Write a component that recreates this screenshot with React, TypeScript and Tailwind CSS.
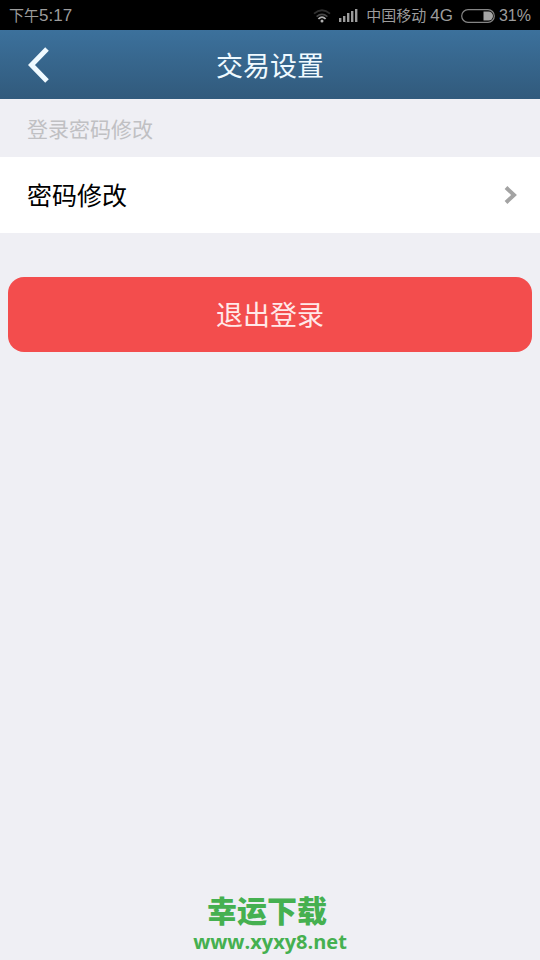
interface SettingItem {
  href: string;
  label: string;
}

const SETTINGS: SettingItem[] = [{ href: "#password", label: "密码修改" }];

function WifiIcon() {
  return (
    <svg width="18" height="14" viewBox="0 0 18 14" fill="none" aria-hidden="true">
      <path d="M1 4.6Q9 -2.2 17 4.6" stroke="#303030" strokeWidth="1.8" />
      <path d="M3.6 7.6Q9 3.2 14.4 7.6" stroke="#484848" strokeWidth="1.6" />
      <path d="M5.4 10Q9 6.2 12.6 10" stroke="#b0b0b0" strokeWidth="1.8" />
      <circle cx="9" cy="12" r="1.5" fill="#b0b0b0" />
    </svg>
  );
}

function SignalIcon() {
  return (
    <svg width="19" height="13" viewBox="0 0 19 13" fill="#9c9c9c" aria-hidden="true">
      <rect x="0" y="9" width="2.4" height="4" />
      <rect x="4" y="7" width="2.4" height="6" />
      <rect x="8" y="4" width="2.4" height="9" />
      <rect x="12" y="2" width="2.4" height="11" />
      <rect x="16" y="0" width="2.4" height="13" />
    </svg>
  );
}

function BatteryIcon() {
  return (
    <svg width="34" height="14" viewBox="0 0 34 14" aria-hidden="true">
      <rect x="0.7" y="0.7" width="32.6" height="12.6" rx="6.3" fill="none" stroke="#858585" strokeWidth="1.2" />
      <path d="M22.5 2.5h5a4.5 4.5 0 0 1 0 9h-5z" fill="#a5a5a5" />
    </svg>
  );
}

function StatusBar() {
  return (
    <div className="flex h-[30px] items-center justify-between bg-black px-[9px] pt-px font-['Liberation_Sans','Noto_Sans_CJK_SC',sans-serif] text-[15px] leading-[30px] text-[#9c9c9c]">
      <span>
        下午<span className="text-[17px]">5:17</span>
      </span>
      <div className="flex items-center">
        <WifiIcon />
        <span className="ml-2">
          <SignalIcon />
        </span>
        <span className="ml-2">中国移动</span>
        <span className="ml-1 text-[17px]">4G</span>
        <span className="mr-1 ml-2">
          <BatteryIcon />
        </span>
        <span className="text-[16px]">31%</span>
      </div>
    </div>
  );
}

function Header() {
  return (
    <header className="grid h-[69px] grid-cols-[80px_1fr_80px] items-center bg-linear-to-b from-[#3c719c] to-[#315a7c] text-[#f0faff]">
      <button type="button" aria-label="返回" className="flex h-full items-center pl-7">
        <svg width="22" height="38" viewBox="0 0 22 38" fill="none" aria-hidden="true">
          <path d="M19 3L3.5 19L19 35" stroke="currentColor" strokeWidth="5" />
        </svg>
      </button>
      <h1 className="text-center text-[27px] leading-9">交易设置</h1>
    </header>
  );
}

export default function App() {
  return (
    <div className="flex min-h-screen flex-col bg-[#efeff4] font-['Noto_Sans_CJK_SC',sans-serif]">
      <StatusBar />
      <Header />

      <main className="flex-1">
        <h2 className="px-[27px] py-[14px] text-[21px] leading-[30px] text-[#c0c0c3]">登录密码修改</h2>
        <nav>
          {SETTINGS.map((item) => (
            <a
              key={item.href}
              href={item.href}
              className="flex h-[76px] items-center justify-between bg-white pr-[23px] pl-[27px] text-[25px] text-black"
            >
              {item.label}
              <svg width="13" height="18" viewBox="0 0 13 18" fill="none" aria-hidden="true">
                <path d="M2 1.5L10 9L2 16.5" stroke="#a3a3a3" strokeWidth="4" />
              </svg>
            </a>
          ))}
        </nav>
        <div className="px-2 pt-11">
          <button
            type="button"
            className="h-[75px] w-full rounded-2xl bg-[#f34d4d] text-[27px] text-[#ffe9e9]"
          >
            退出登录
          </button>
        </div>
      </main>

      <footer className="pb-1 text-center font-bold text-[#45b050]">
        <p className="pr-1.5 font-['Liberation_Sans','Noto_Sans_CJK_SC',sans-serif] text-[30px] leading-8 font-black">
          幸运下载
        </p>
        <a href="#home" className="block font-['Open_Sans',sans-serif] text-[20px] leading-7">
          www.xyxy8.net
        </a>
      </footer>
    </div>
  );
}
